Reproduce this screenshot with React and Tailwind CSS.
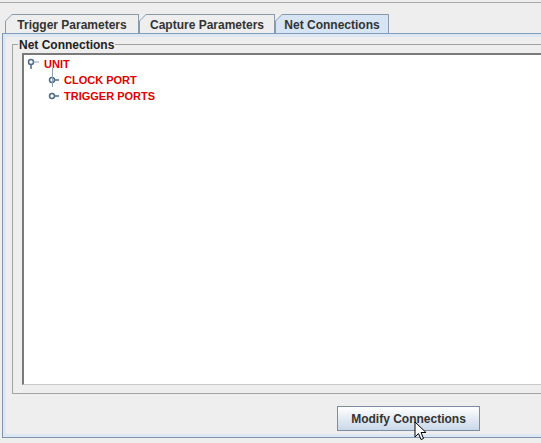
import React from 'react';

const tabs = [
  { label: 'Trigger Parameters', w: 'w-[134px]', active: false },
  { label: 'Capture Parameters', w: 'w-[136px]', active: false },
  { label: 'Net Connections', w: 'w-[114px]', active: true },
];

const Tab = ({ label, w, active }) => (
  <div
    className={`${w} h-[19px] bg-[#8a9aab] pt-[1px] pl-[1px] pr-[1px]`}
    style={{ clipPath: 'polygon(7px 0, 100% 0, 100% 100%, 0 100%, 0 7px)' }}
  >
    <div
      className={`h-full flex items-center justify-center pt-[1px] text-[12px] font-bold text-[#333333] ${
        active ? 'bg-[#d6e4f3]' : 'bg-[#eeeeee]'
      }`}
      style={{ clipPath: 'polygon(6px 0, 100% 0, 100% 100%, 0 100%, 0 6px)' }}
    >
      {label}
    </div>
  </div>
);

const ExpandedHandle = () => (
  <svg width="14" height="12" viewBox="0 0 14 12" className="shrink-0">
    <circle cx="4" cy="4" r="2.5" fill="#ffffff" stroke="#4a6a8e" strokeWidth="1.5" />
    <line x1="4" y1="6.5" x2="4" y2="11" stroke="#4a6a8e" strokeWidth="1.5" />
    <line x1="6.5" y1="4" x2="12" y2="4" stroke="#8aa0b8" strokeWidth="1" />
  </svg>
);

const CollapsedHandle = () => (
  <svg width="14" height="10" viewBox="0 0 14 10" className="shrink-0">
    <circle cx="4" cy="5" r="2.5" fill="#ffffff" stroke="#4a6a8e" strokeWidth="1.5" />
    <line x1="6.5" y1="5" x2="11" y2="5" stroke="#4a6a8e" strokeWidth="1.5" />
  </svg>
);

export default function App() {
  return (
    <div
      className="relative w-[541px] h-[443px] overflow-hidden bg-[#eeeeee] flex flex-col"
      style={{ fontFamily: '"Liberation Sans", Arial, sans-serif' }}
    >
      {/* top edge */}
      <div className="h-[3px] border-b border-[#a9a9a9] shrink-0" />

      {/* tab strip */}
      <div className="flex items-end pl-[5px] h-[30px] shrink-0">
        {tabs.map((t) => (
          <Tab key={t.label} {...t} />
        ))}
      </div>

      {/* tab content */}
      <div className="ml-[2px] mr-[-4px] h-[405px] border border-[#7f93ab] border-t-[#7f9db9] bg-[#dce7f3] p-[3px] shrink-0">
        <div className="h-full bg-[#eeeeee] pt-[7px] pl-[6px] flex flex-col">
          {/* titled border */}
          <div className="relative h-[350px] mr-[-4px] border border-[#a3a3a3] pl-[9px] pt-[8px] pb-[8px] shrink-0">
            <span className="absolute left-[5px] top-[-7px] bg-[#eeeeee] px-[1px] text-[12px] leading-[14px] font-bold text-[#222222]">
              Net Connections
            </span>
            <div className="h-full border-t-2 border-l-2 border-t-[#7a7a7a] border-l-[#7a7a7a] border-b border-b-[#c8c8c8] bg-white pt-[1px] pl-[3px]">
              <div className="flex items-center h-[16px]">
                <ExpandedHandle />
                <span className="ml-[3px] text-[11px] font-bold text-[#e00000]">UNIT</span>
              </div>
              <div className="relative pl-[21px]">
                <div className="absolute left-[25px] top-[-4px] h-[19px] border-l border-[#8aa0b8]" />
                <div className="flex items-center h-[16px]">
                  <CollapsedHandle />
                  <span className="ml-[2px] text-[11px] font-bold text-[#e00000]">CLOCK PORT</span>
                </div>
                <div className="flex items-center h-[16px]">
                  <CollapsedHandle />
                  <span className="ml-[2px] text-[11px] font-bold text-[#e00000]">TRIGGER PORTS</span>
                </div>
              </div>
            </div>
          </div>

          {/* button row */}
          <div className="flex pl-[325px] pt-[12px]">
            <button className="w-[143px] h-[25px] border border-[#7b8da3] bg-gradient-to-b from-[#ffffff] to-[#c9d8e8] text-[12px] font-bold text-[#333333]">
              Modify Connections
            </button>
          </div>
        </div>
      </div>

      {/* mouse pointer */}
      <svg
        className="absolute left-[414px] top-[421px]"
        width="14"
        height="20"
        viewBox="0 0 14 20"
      >
        <path
          d="M1 1 L1 16 L4.5 12.5 L7 18.5 L9.5 17.5 L7 11.5 L12 11.5 Z"
          fill="#ffffff"
          stroke="#000000"
          strokeWidth="1"
          strokeLinejoin="round"
        />
      </svg>
    </div>
  );
}
